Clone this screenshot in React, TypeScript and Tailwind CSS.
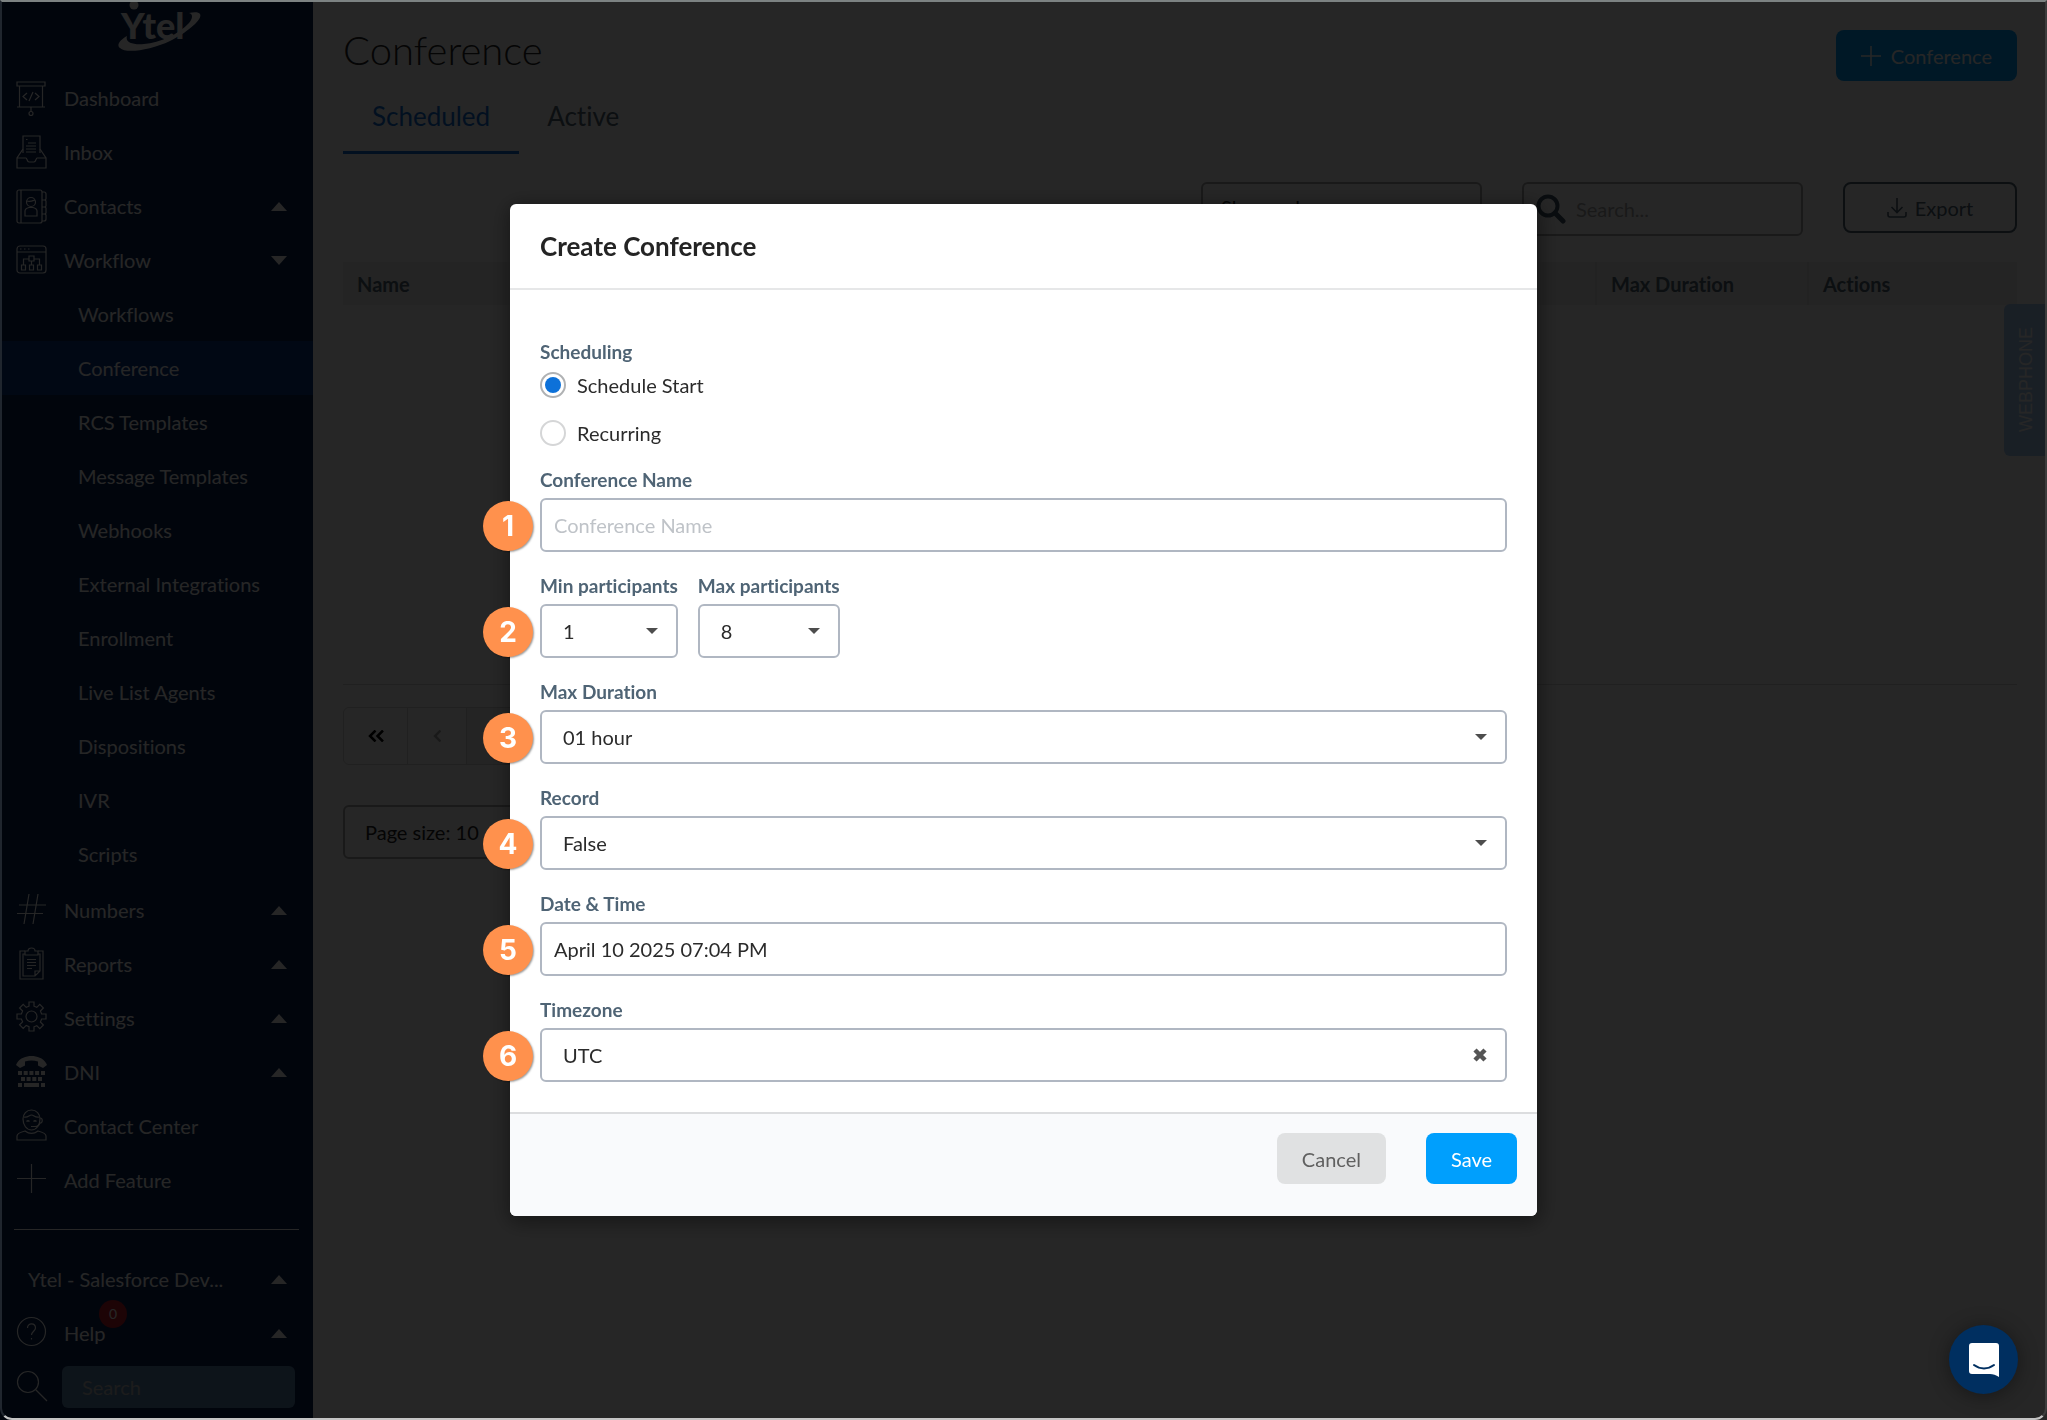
import { useState, type ReactNode } from 'react'

const subItems = [
  'Workflows', 'Conference', 'RCS Templates', 'Message Templates', 'Webhooks', 'External Integrations',
  'Enrollment', 'Live List Agents', 'Dispositions', 'IVR', 'Scripts',
]

const icons: Record<string, ReactNode> = {
  dashboard: (
    <>
      <path d="M1 1h28v4H1zM3.500 5v21M26.500 5v21M1 26h28M15 26v5" />
      <circle cx="15" cy="32.500" r="2" />
      <path d="M11 12l-4 3.500 4 3.500M19 12l4 3.500-4 3.500M17 11l-4 9" />
    </>
  ),
  inbox: (
    <>
      <path d="M7 18V1h17v17M12 8h8M10 11h10M10 14h10M10 17h10M10 4.500h1.500" />
      <path d="M7 14L1 23v10h29V23l-6-9M1 23h9c1 0 1 4 3 4h5c2 0 2-4 3-4h9" />
    </>
  ),
  contacts: (
    <>
      <rect x="1" y="1" width="25" height="33" rx="2" />
      <path d="M5 1v33M26 3h2c1 0 2 1 2 2v5l-1 1 1 1v5l-1 1 1 1v5l-1 1 1 1v4c0 1-1 2-2 2h-2M26 11h3M26 18h3M26 25h3" />
      <circle cx="15" cy="13" r="4.500" />
      <path d="M11 12c3 1 5 0 8-1M9 27v-5c0-2 2-3 4-3.500h4c2 .5 4 1.500 4 3.500v5z" />
    </>
  ),
  workflow: (
    <>
      <rect x="1" y="3" width="29" height="27" rx="3" />
      <path d="M1 9h29M4 6h1.500M8 6h1.500M12 6h1.500M13 13h5v5h-5zM5.500 22h4v5h-4zM13.500 22h4v5h-4zM21.500 22h4v5h-4zM7.500 22v-6H13M18 16h5.500v6M15.500 18v4" />
    </>
  ),
  numbers: <path d="M13 1L8 31M22 1l-5 30M3 12h27M1 20.500h26" />,
  reports: (
    <>
      <path d="M9 4H4v28h23V4h-5" />
      <path d="M9 7H7v22h12l5-5V7h-2M19 29v-5h5M9 8V4h3c0-2 1.500-3 3.500-3S19 2 19 4h3v4zM11 12.500h9M11 15.500h9M11 18.500h9M11 21.500h5" />
    </>
  ),
  settings: (
    <>
      <circle cx="15.500" cy="15.500" r="5.500" />
      <path d="M13 1h5v4.200l2.800 1.200 3-3 3.600 3.600-3 3 1.200 3H30v5h-4.400l-1.200 3 3 3-3.600 3.600-3-3-2.800 1.200V30h-5v-4.400l-2.800-1.200-3 3-3.600-3.600 3-3L5.400 18H1v-5h4.400l1.200-3-3-3 3.600-3.600 3 3L13 5.200z" />
    </>
  ),
  dni: (
    <g fill="currentColor" stroke="none">
      <path d="M1 8C4 3 10 1 15.500 1S27 3 30 8l1 2-4 3-5-2.500V6.500c-4-1.300-9-1.300-13 0V10.500L4 13 0 10z" />
      <path d="M2 16h4v4H2zM7.700 16h4v4h-4zM13.400 16h4v4h-4zM19.100 16h4v4h-4zM25 16h4v4h-4zM5 22h4v4H5zM10.600 22h4v4h-4zM16.300 22h4v4h-4zM22 22h4v4h-4zM2 28h4v4H2zM8 28h15v4H8zM25 28h4v4h-4z" />
    </g>
  ),
  contact: (
    <>
      <path d="M7 10c0-5 3.500-9 8.500-9S24 5 24 10c0 6-3.500 11-8.500 11S7 16 7 10z" />
      <path d="M8 8c4 1 5-2 7.500-2S19 9 23 8M24 9c3 0 3 5 0 5M24 14c-1 3-3 3.500-5 3.500h-4M10.500 12.500c1-1 2-1 3 0M17.500 12.500c1-1 2-1 3 0M1 31v-4c0-3 4-4 8-5 4 3 9 3 13 0 4 1 8 2 8 5v4z" />
    </>
  ),
  add: <path d="M15.500 1v29M1 15.500h29" />,
  help: (
    <>
      <circle cx="15.500" cy="15.500" r="14" />
      <path d="M11.500 12c0-5.500 8-5.500 8 0 0 3-4 3.500-4 7M15.500 22v1.500" />
    </>
  ),
  search: (
    <>
      <circle cx="12" cy="12" r="10.500" />
      <path d="M19.500 19.500L31 31" />
    </>
  ),
}

function NavIcon({ name }: { name: string }) {
  return (
    <svg viewBox="0 0 32 35" className="h-[35px] w-8 shrink-0" fill="none" stroke="currentColor" strokeWidth="1.2">
      {icons[name]}
    </svg>
  )
}

function Caret({ up = false }: { up?: boolean }) {
  return (
    <svg viewBox="0 0 16 9" className="h-[9px] w-4" fill="currentColor">
      <path d={up ? 'M8 0l8 9H0z' : 'M8 9L0 0h16z'} />
    </svg>
  )
}

function NavItem({ icon, label, open }: { icon: string; label: string; open?: boolean }) {
  return (
    <a href="#" className="flex h-[54px] items-center pl-4 pr-[26px]">
      <NavIcon name={icon} />
      <span className="ml-4 flex-1">{label}</span>
      {open !== undefined && <Caret up={!open} />}
    </a>
  )
}

function Logo() {
  return (
    <svg viewBox="0 0 84 52" className="h-[52px] w-[84px]" role="img" aria-label="Ytel">
      <circle cx="16" cy="5" r="4.500" fill="currentColor" />
      <text x="3" y="39" fontFamily="Lato, sans-serif" fontWeight="900" fontSize="36" fill="currentColor">Ytel</text>
      <path d="M9 36C2 40-2 45 2 48c6 6 31 2 50-7C70 32 85 19 82 14c-1-2-6-2-11-1 4 1 4 5 0 10C61 34 42 43 26 44c-12 1-19-2-17-8z" fill="currentColor" />
    </svg>
  )
}

function Sidebar() {
  return (
    <nav className="flex w-[313px] shrink-0 flex-col bg-[#072252] text-xl text-white shadow-[2px_0_10px_rgba(0,0,0,0.3)]">
      <div className="flex h-[71px] justify-center pl-1.5">
        <Logo />
      </div>
      <NavItem icon="dashboard" label="Dashboard" />
      <NavItem icon="inbox" label="Inbox" />
      <NavItem icon="contacts" label="Contacts" open={false} />
      <NavItem icon="workflow" label="Workflow" open />
      <div className="mb-0.5">
        {subItems.map(item => (
          <a
            key={item}
            href="#"
            className={`flex h-[54px] items-center pl-[78px] ${item === 'Conference' ? 'bg-[#073585]' : ''}`}
          >
            {item}
          </a>
        ))}
      </div>
      <NavItem icon="numbers" label="Numbers" open={false} />
      <NavItem icon="reports" label="Reports" open={false} />
      <NavItem icon="settings" label="Settings" open={false} />
      <NavItem icon="dni" label="DNI" open={false} />
      <NavItem icon="contact" label="Contact Center" />
      <NavItem icon="add" label="Add Feature" />
      <hr className="mx-3.5 my-[22px] border-white" />
      <a href="#" className="flex h-[54px] items-center pl-7 pr-[26px]">
        <span className="flex-1">Ytel - Salesforce Dev...</span>
        <Caret up />
      </a>
      <div className="relative">
        <NavItem icon="help" label="Help" open={false} />
        <span className="absolute -top-1.5 left-[99px] flex size-7 items-center justify-center rounded-full bg-[#c01f2a] text-sm">
          0
        </span>
      </div>
      <div className="flex h-[54px] items-center pl-4 pr-[18px]">
        <NavIcon name="search" />
        <input
          type="text"
          aria-label="Search"
          placeholder="Search"
          className="ml-3.5 h-[42px] w-full min-w-0 rounded-md bg-[#5a85ad] px-5 placeholder:text-[#bbb]"
        />
      </div>
    </nav>
  )
}

function ConferencePage() {
  return (
    <main className="min-w-0 flex-1 bg-white px-[30px] text-xl text-[#212121]">
      <div className="flex items-start justify-between pt-[30px]">
        <h1 className="text-[40px] font-light leading-10">Conference</h1>
        <button className="flex h-[51px] items-center gap-2.5 rounded-lg bg-[#009ffd] px-[25px] text-white">
          <svg viewBox="0 0 20 20" className="size-5" stroke="currentColor" strokeWidth="1.5">
            <path d="M10 0v20M0 10h20" />
          </svg>
          Conference
        </button>
      </div>
      <div className="flex text-[26px] leading-8">
        <button className="h-[73px] border-b-[3px] border-[#0e6fd8] px-[29px] text-[#0e6fd8]">Scheduled</button>
        <button className="h-[73px] border-b-[3px] border-transparent px-7 text-[#4f6475]">Active</button>
      </div>
      <div className="mt-7 flex items-start justify-end gap-10">
        <select aria-label="Show columns" className="h-[54px] w-[281px] appearance-none rounded-md border-2 border-[#a8a8a8] px-[18px] pb-1">
          <option>Show columns</option>
        </select>
        <div className="flex h-[54px] w-[281px] items-center rounded-md border-2 border-[#a8a8a8] pl-3">
          <svg viewBox="0 0 30 30" className="size-[30px] shrink-0 text-[#3f5566]" fill="none" stroke="currentColor">
            <circle cx="12" cy="12" r="9.500" strokeWidth="4" />
            <path d="M19 19l8 8" strokeWidth="5" strokeLinecap="round" />
          </svg>
          <input type="text" aria-label="Search conferences" placeholder="Search..." className="ml-2.5 w-full min-w-0 placeholder:text-[#aaa]" />
        </div>
        <button className="flex h-[51px] w-[174px] items-center justify-center gap-2 rounded-lg border-2 border-[#4f6475] text-[#4f6475]">
          <svg viewBox="0 0 20 20" className="size-5" fill="none" stroke="currentColor" strokeWidth="1.6">
            <path d="M10 0v14M4.500 9l5.500 5.500L15.500 9M1 14v3c0 1.500.5 2 2 2h14c1.500 0 2-.5 2-2v-3" />
          </svg>
          Export
        </button>
      </div>
      <table className="mt-[26px] w-full text-left font-bold text-[#4f6475]">
        <thead>
          <tr className="h-[43px] bg-[#f0f0f0]">
            <th className="pl-3.5">Name</th>
            <th className="w-[212px] border-l-2 border-[#e0e0e0] pl-3.5">Max Duration</th>
            <th className="w-[209px] border-l-2 border-[#e0e0e0] pl-3.5">Actions</th>
          </tr>
        </thead>
      </table>
      <div className="h-[380px] border-b border-[#d8d8d8]" />
      <div className="mt-[22px] flex h-[58px] w-[520px] rounded-md border border-[#d4d4d4] text-black">
        <button aria-label="First page" className="flex w-16 items-center justify-center border-r border-[#d4d4d4]">
          <svg viewBox="0 0 16 12" className="h-3 w-4" fill="none" stroke="currentColor" strokeWidth="2.5">
            <path d="M7.500 0.500L2 6l5.500 5.500M15 0.500L9.500 6l5.500 5.500" />
          </svg>
        </button>
        <button aria-label="Previous page" className="flex w-[59px] items-center justify-center border-r border-[#d4d4d4] text-[#aaa]">
          <svg viewBox="0 0 8 12" className="h-3 w-2" fill="none" stroke="currentColor" strokeWidth="2.5">
            <path d="M7.500 0.500L2 6l5.500 5.500" />
          </svg>
        </button>
        <span className="flex-1 bg-[#f2f2f2]" />
      </div>
      <select aria-label="Page size" className="mt-10 h-[54px] w-[281px] appearance-none rounded-md border-2 border-[#a8a8a8] px-5">
        <option>Page size: 10</option>
      </select>
    </main>
  )
}

function Marker({ n }: { n: number }) {
  return (
    <span className="absolute -left-[57px] bottom-px flex size-[50px] items-center justify-center rounded-full bg-[#ff914d] font-['Inter',sans-serif] text-[28px] font-bold text-white shadow-[1px_1px_2px_rgba(0,0,0,0.4)]">
      {n}
    </span>
  )
}

function Field({ id, label, n, children }: { id: string; label: string; n?: number; children: ReactNode }) {
  return (
    <div className="relative">
      <label htmlFor={id} className="mb-1.5 block text-[19px] font-bold leading-6 text-[#4f6475]">
        {label}
      </label>
      {children}
      {n && <Marker n={n} />}
    </div>
  )
}

function Dropdown({ id, value }: { id: string; value: string }) {
  return (
    <div className="relative">
      <select id={id} className="block h-[54px] w-full appearance-none rounded-md border-2 border-[#b0b7c2] bg-white pl-[21px] text-xl text-[#2b2b2b]">
        <option>{value}</option>
      </select>
      <svg viewBox="0 0 12 6" className="pointer-events-none absolute right-5 top-6 h-1.5 w-3 text-[#4d4d4d]" fill="currentColor">
        <path d="M0 0h12L6 6z" />
      </svg>
    </div>
  )
}

function Radio({ label, checked, onChange }: { label: string; checked: boolean; onChange: () => void }) {
  return (
    <label className="flex h-10 items-center gap-[11px] text-xl text-[#2b2b2b]">
      <input
        type="radio"
        name="scheduling"
        checked={checked}
        onChange={onChange}
        className="size-[26px] appearance-none rounded-full border-2 border-[#d5d6d7] bg-white checked:border-[#b0b2b4] checked:bg-[#0d71d9] checked:bg-clip-content checked:p-[3px]"
      />
      {label}
    </label>
  )
}

function CreateConferenceModal() {
  const [mode, setMode] = useState('start')
  const inputClass = 'block h-[54px] w-full rounded-md border-2 border-[#b0b7c2] bg-white px-3 text-xl text-[#2b2b2b] placeholder:text-[#bfc3c8]'

  return (
    <form role="dialog" aria-label="Create Conference" className="w-full max-w-[1027px] rounded-md bg-white shadow-[1px_4px_20px_3px_rgba(0,0,0,0.4)]">
      <div className="border-b-2 border-[#e6e7e8] px-[30px] py-[26px]">
        <h2 className="text-[26px] font-bold leading-8 text-[#242424]">Create Conference</h2>
      </div>
      <div className="flex flex-col gap-[22px] px-[30px] pb-[30px] pt-[50px]">
        <fieldset className="-mb-[7px]">
          <legend className="text-[19px] font-bold leading-6 text-[#4f6475]">Scheduling</legend>
          <div className="mt-px flex flex-col gap-2">
            <Radio label="Schedule Start" checked={mode === 'start'} onChange={() => setMode('start')} />
            <Radio label="Recurring" checked={mode === 'recurring'} onChange={() => setMode('recurring')} />
          </div>
        </fieldset>
        <Field id="name" label="Conference Name" n={1}>
          <input id="name" type="text" placeholder="Conference Name" className={inputClass} />
        </Field>
        <div className="flex gap-5">
          <Field id="min" label="Min participants" n={2}>
            <Dropdown id="min" value="1" />
          </Field>
          <Field id="max" label="Max participants">
            <Dropdown id="max" value="8" />
          </Field>
        </div>
        <Field id="duration" label="Max Duration" n={3}>
          <Dropdown id="duration" value="01 hour" />
        </Field>
        <Field id="record" label="Record" n={4}>
          <Dropdown id="record" value="False" />
        </Field>
        <Field id="date" label="Date & Time" n={5}>
          <input id="date" type="text" defaultValue="April 10 2025 07:04 PM" className={inputClass} />
        </Field>
        <Field id="timezone" label="Timezone" n={6}>
          <div className="relative">
            <input
              id="timezone"
              type="text"
              defaultValue="UTC"
              className="block h-[54px] w-full rounded-md border-2 border-[#b0b7c2] bg-white px-[21px] text-xl text-[#2b2b2b]"
            />
            <button type="button" aria-label="Clear timezone" className="absolute right-5 top-5 text-[#555]">
              <svg viewBox="0 0 14 14" className="size-3.5" stroke="currentColor" strokeWidth="4.500">
                <path d="M2 2l10 10M12 2L2 12" />
              </svg>
            </button>
          </div>
        </Field>
      </div>
      <div className="flex justify-end gap-10 rounded-b-md border-t-2 border-[#dcdddf] bg-[#f9fafc] px-5 pb-8 pt-[19px] text-xl">
        <button type="button" className="h-[51px] rounded-lg bg-[#e0e1e2] px-[25px] text-[#606060]">Cancel</button>
        <button type="button" className="h-[51px] rounded-lg bg-[#009ffd] px-[25px] text-white">Save</button>
      </div>
    </form>
  )
}

export default function App() {
  return (
    <div className="relative flex min-h-screen font-['Lato',sans-serif] [font-variant-ligatures:no-common-ligatures]">
      <Sidebar />
      <ConferencePage />
      <div className="absolute right-0 top-[304px] flex h-[152px] w-[43px] items-center justify-center rounded-l-md bg-[#a8cdf8] font-['Liberation_Sans',sans-serif] text-lg text-white">
        <span className="rotate-180 [writing-mode:vertical-rl]">WEBPHONE</span>
      </div>
      <div className="fixed inset-0 flex items-center justify-center bg-black/85">
        <CreateConferenceModal />
      </div>
      <button
        aria-label="Open chat"
        className="fixed bottom-[26px] right-[29px] flex size-[69px] items-center justify-center rounded-full bg-[#002f60] shadow-[0_2px_20px_rgba(0,0,0,0.4)]"
      >
        <svg viewBox="0 0 30 34" className="h-[34px] w-[30px]">
          <path d="M3 0h24c2 0 3 1 3 3v31c-3-2-6-3-9-3H3c-2 0-3-1-3-3V3c0-2 1-3 3-3z" fill="#fff" />
          <path d="M5 22c6 4.500 14 4.500 20 0" fill="none" stroke="#002f60" strokeWidth="2" strokeLinecap="round" />
        </svg>
      </button>
      {/* window edge */}
      <div className="pointer-events-none fixed inset-0 rounded-b-xl border-2 border-b-[#c4c4c4] border-l-[#20262e] border-r-[#3c3c3c] border-t-[#7c8282]" />
    </div>
  )
}
